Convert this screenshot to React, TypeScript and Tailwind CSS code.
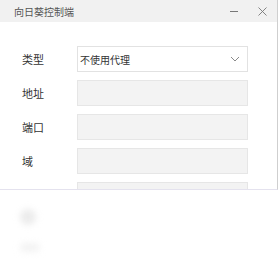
import React from 'react';

const font = { fontFamily: '"Noto Sans CJK SC", "Noto Sans", sans-serif' };

const Row: React.FC<{ label: string; children?: React.ReactNode; select?: boolean }> = ({ label, children, select }) => (
  <div className="flex items-center h-[26px]">
    <div className="w-[77px] shrink-0 pl-[22px] text-[11px] leading-none text-[#333]">{label}</div>
    {select ? (
      <div className="w-[171px] h-[26px] flex items-center justify-between bg-white border border-[#e2e2e2] pl-[2px] pr-[7px]">
        <span className="text-[10px] text-[#333]">{children}</span>
        <svg width="10" height="6" viewBox="0 0 10 6" fill="none" stroke="#8a8a8a" strokeWidth="1">
          <path d="M1 1l4 4 4-4" />
        </svg>
      </div>
    ) : (
      <div className="w-[171px] h-[26px] bg-[#f3f3f3] border border-[#e6e6e6]" />
    )}
  </div>
);

export default function App() {
  return (
    <div className="w-[280px] h-[270px] bg-white overflow-hidden" style={font}>
      <div className="w-[278px] h-[190px] overflow-hidden border-r border-b border-r-[#cfcfcf] border-b-[#e4e2ee] bg-white">
        <div className="h-[22px] bg-[#f1f1f1] flex items-center pl-[14px] pr-[10px]">
          <span className="text-[10px] text-[#555] flex-1">向日葵控制端</span>
          <div className="w-[8px] h-px bg-[#777] mr-[20px]" />
          <svg width="9" height="9" viewBox="0 0 9 9" stroke="#777" strokeWidth="0.9">
            <path d="M0.5 0.5l8 8M8.5 0.5l-8 8" />
          </svg>
        </div>
        <div className="pt-[24px] flex flex-col gap-[8px]">
          <Row label="类型" select>不使用代理</Row>
          <Row label="地址" />
          <Row label="端口" />
          <Row label="域" />
          <Row label="" />
        </div>
      </div>
      <div className="flex flex-col pl-[20px] pt-[19px]">
        <div className="w-[16px] h-[16px] rounded-full bg-[#ececec] blur-[3px]" />
        <div className="w-[20px] h-[9px] mt-[18px] rounded-full bg-[#f3f3f3] blur-[3px]" />
      </div>
    </div>
  );
}
